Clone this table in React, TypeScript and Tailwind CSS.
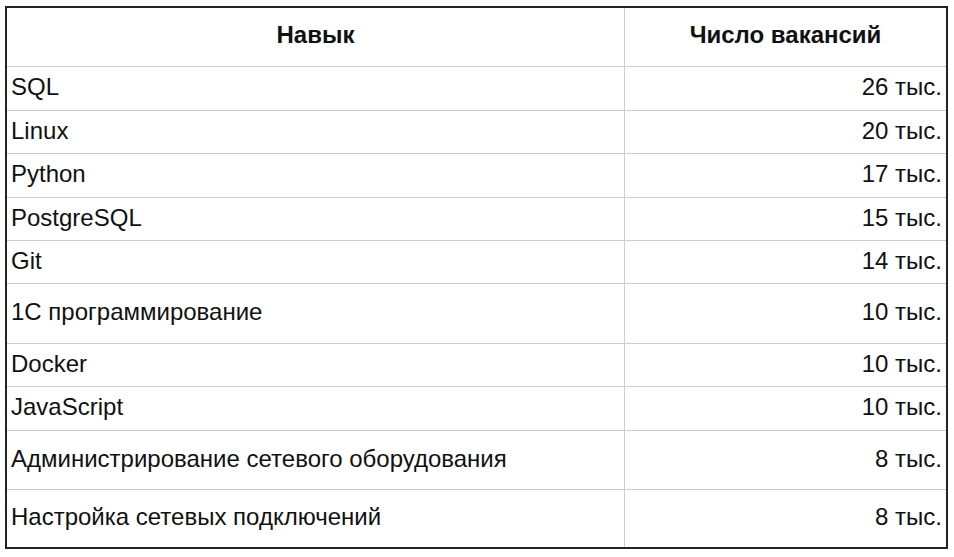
import React from "react";

const rows: { skill: string; count: string; h: string }[] = [
  { skill: "SQL", count: "26 тыс.", h: "h-[44px]" },
  { skill: "Linux", count: "20 тыс.", h: "h-[43px]" },
  { skill: "Python", count: "17 тыс.", h: "h-[44px]" },
  { skill: "PostgreSQL", count: "15 тыс.", h: "h-[43px]" },
  { skill: "Git", count: "14 тыс.", h: "h-[43px]" },
  { skill: "1С программирование", count: "10 тыс.", h: "h-[60px]" },
  { skill: "Docker", count: "10 тыс.", h: "h-[43px]" },
  { skill: "JavaScript", count: "10 тыс.", h: "h-[44px]" },
  { skill: "Администрирование сетевого оборудования", count: "8 тыс.", h: "h-[59px]" },
  { skill: "Настройка сетевых подключений", count: "8 тыс.", h: "h-[57px]" },
];

export default function App() {
  return (
    <div
      className="w-[954px] h-[557px] bg-white pt-[6px] pl-[5px] text-[#111] text-[24px] leading-[28px]"
      style={{ fontFamily: '"Liberation Sans", Arial, sans-serif' }}
    >
      <div className="w-[943px] border-2 border-[#222] flex flex-col">
        <div className="flex h-[59px] border-b border-[#cdcdcd] font-bold">
          <div className="w-[618px] border-r border-[#cdcdcd] flex items-center justify-center pb-[4px]">
            Навык
          </div>
          <div className="flex-1 flex items-center justify-center pb-[4px]">Число вакансий</div>
        </div>
        {rows.map((r, i) => (
          <div
            key={r.skill}
            className={`flex ${r.h} ${i < rows.length - 1 ? "border-b border-[#cdcdcd]" : ""}`}
          >
            <div className="w-[618px] border-r border-[#cdcdcd] flex items-center pl-[4px] pb-[3px]">
              {r.skill}
            </div>
            <div className="flex-1 flex items-center justify-end pr-[4px] pb-[3px]">{r.count}</div>
          </div>
        ))}
      </div>
    </div>
  );
}
